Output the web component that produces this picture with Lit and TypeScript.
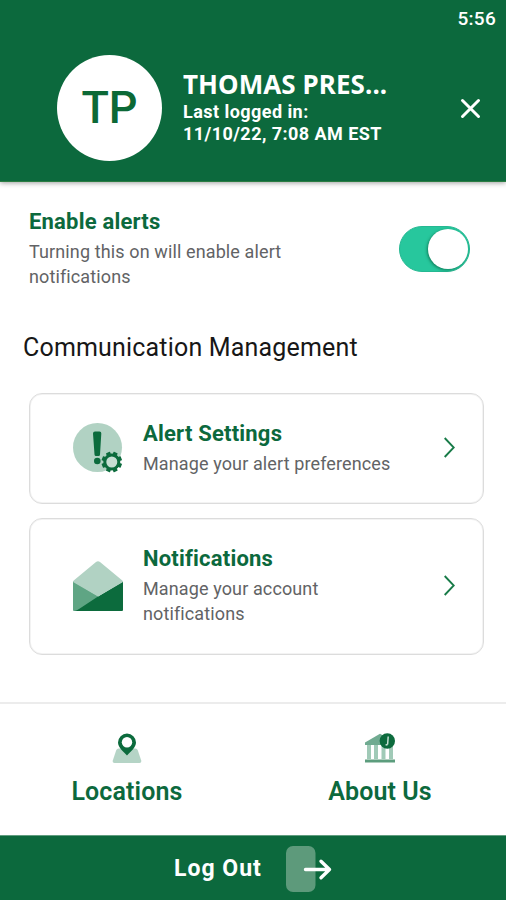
import { LitElement, html, css, svg } from "lit";
import { customElement } from "lit/decorators.js";

const gearTeeth = [0, 45, 90, 135, 180, 225, 270, 315];

const alertIcon = html`<svg width="50" height="50" viewBox="0 0 50 50">
  <circle cx="24.5" cy="24.5" r="24.5" fill="#b1d2c3" />
  <path d="M20 10.500Q20 8.500 22 8.500H26.500Q28.500 8.500 28.300 10.500L27 31.500Q27 33 25.500 33H23Q21.600 33 21.500 31.500Z" fill="#0c6b3d" />
  <circle cx="24.300" cy="38" r="3.300" fill="#0c6b3d" />
  <circle cx="38.800" cy="39" r="7" fill="#c6ded3" stroke="#0c6b3d" stroke-width="3" />
  ${gearTeeth.map((a) => svg`<rect x="36.600" y="28.700" width="4.400" height="3.500" rx=".5" fill="#0c6b3d" transform="rotate(${a + 22.5} 38.800 39)" />`)}
</svg>`;

const mailIcon = html`<svg width="50" height="52" viewBox="0 0 50 52">
  <path d="M0 21V50Q0 51 1 51H25V36Z" fill="#5fa584" />
  <path d="M50 21.500V50Q50 51 49 51H1.500Q4 50.500 6 49L25 36.500Z" fill="#0c6b3d" />
  <path d="M0 22Q0 21 1 20.200L23 2Q25 .7 27 2L49 20.200Q50 21 50 22L25 36.500Z" fill="#b1d2c3" />
</svg>`;

const pinIcon = html`<svg width="30" height="31" viewBox="0 0 30 31">
  <path d="M6.500 15.500H23.500Q25 15.500 25.700 17L29.200 27.600Q29.700 30 27.500 30H2.500Q.3 30 .8 27.600L4.300 17Q5 15.500 6.500 15.500Z" fill="#b5d4c6" />
  <path d="M15 22.500C11.500 18.500 6 14.500 6 9.500A9 9 0 0 1 24 9.500C24 14.500 18.500 18.500 15 22.500Z" fill="#0c6b3d" />
  <circle cx="15" cy="9.300" r="5.200" fill="#fff" />
</svg>`;

const bankIcon = html`<svg width="32" height="31" viewBox="0 0 32 31">
  <path d="M1 12V9.500L16 .8L22 4V12Z" fill="#70ab91" />
  <path d="M3 12H7V26H3ZM10 12H14V26H10ZM17.500 12H21.500V26H17.500ZM25 14H29V26H25Z" fill="#a0cab7" />
  <path d="M1 26.500H31V29.500H1Z" fill="#5c9d7d" />
  <circle cx="23.300" cy="8" r="7.700" fill="#0c6b3d" />
  <path d="M24.200 3.500L23.600 11.500M23.600 11.500L21.600 12" stroke="#c4ded1" stroke-width="1.500" fill="none" />
</svg>`;

const chevron = html`<svg class="chevron" width="12" height="21" viewBox="0 0 12 21">
  <path d="M1.700 1L10.800 10.500L1.700 20" fill="none" stroke="#187b48" stroke-width="1.900" />
</svg>`;

@customElement("app-root")
export class AppRoot extends LitElement {
  static styles = css`
    :host {
      display: flex;
      flex-direction: column;
      height: 900px;
      width: 506px;
      background: #fff;
      font-family: Roboto, sans-serif;
      overflow: hidden;
    }
    * { box-sizing: border-box; }
    svg { display: block; flex: none; }
    header {
      flex: none;
      height: 182px;
      background: #0c693d;
      border-bottom: 1px solid #2b7d43;
      box-shadow: 0 1px 5px rgba(0, 0, 0, 0.38);
      color: #fff;
    }
    .status {
      height: 37px;
      padding-right: 10px;
      text-align: right;
      font-size: 19px;
      font-weight: 500;
      line-height: 38px;
      letter-spacing: 0.3px;
    }
    .profile { display: flex; height: 142px; align-items: center; padding: 0 25.500px 0 57px; }
    .avatar {
      width: 105px;
      height: 106px;
      border-radius: 50%;
      background: #fff;
      color: #0c6936;
      font-size: 45px;
      font-weight: 500;
      line-height: 106px;
      text-align: center;
    }
    .who { margin-left: 21px; flex: 1; white-space: nowrap; padding-bottom: 2px; }
    .name { font: 700 26px/30px "Noto Sans", sans-serif; letter-spacing: 0.08px; padding-bottom: 2px; }
    .last { font-size: 18px; font-weight: 700; line-height: 22px; letter-spacing: 0.45px; }
    .enable { display: flex; align-items: center; height: 134px; padding: 0 36px 0 29px; }
    .copy { flex: 1; white-space: nowrap; padding-bottom: 5px; }
    .title { color: #0c693d; font-size: 22px; font-weight: 700; line-height: 34px; letter-spacing: 0.2px; }
    .text { color: #626365; font-size: 18px; line-height: 25px; letter-spacing: 0.12px; }
    .toggle {
      display: flex;
      justify-content: flex-end;
      align-items: center;
      width: 71px;
      height: 46px;
      border-radius: 23px;
      background: #27c79d;
      border: 1px solid #25b892;
      padding-right: 1px;
    }
    .knob { width: 40px; height: 40px; border-radius: 50%; background: #fff; box-shadow: -1px 1px 3px rgba(0, 80, 50, 0.6); }
    h2 {
      margin: 0;
      padding: 1px 0 0 23px;
      font-size: 25px;
      font-weight: 400;
      line-height: 61px;
      color: #171717;
      letter-spacing: 0.18px;
    }
    .cards { display: flex; flex-direction: column; gap: 14px; padding: 15px 22px 0 29px; }
    .card {
      display: flex;
      align-items: center;
      border: 1px solid #dcdcdc;
      box-shadow: inset 0 0 0 1px #f3f3f3;
      border-radius: 13px;
      padding: 0 28px 0 43px;
      height: 111px;
    }
    .card.tall { height: 137px; }
    .icon { width: 70px; padding-bottom: 1px; }
    .chevron { margin-bottom: 2px; }
    nav { flex: none; display: flex; margin-top: 47px; height: 133px; border-top: 2px solid #ececec; }
    .tab {
      flex: 1;
      display: flex;
      flex-direction: column;
      align-items: center;
      padding: 29px 0 0 1px;
      gap: 12px;
      color: #0c693d;
      font-size: 25px;
      font-weight: 600;
      line-height: 32px;
      letter-spacing: 0.12px;
    }
    footer {
      flex: 1;
      display: flex;
      align-items: center;
      gap: 24px;
      padding: 1px 0 0 174px;
      background: #0c693d;
      border-top: 1px solid #619d80;
      color: #fff;
      font-size: 23px;
      font-weight: 700;
      letter-spacing: 1px;
    }
  `;

  render() {
    return html`
      <header>
        <div class="status">5:56</div>
        <div class="profile">
          <div class="avatar">TP</div>
          <div class="who">
            <div class="name">THOMAS PRES...</div>
            <div class="last">Last logged in:<br />11/10/22, 7:08 AM EST</div>
          </div>
          <svg width="21" height="21" viewBox="0 0 21 21">
            <path d="M2.500 2.500L18.500 18.500M18.500 2.500L2.500 18.500" stroke="#fff" stroke-width="3" stroke-linecap="round" />
          </svg>
        </div>
      </header>
      <section class="enable">
        <div class="copy">
          <div class="title">Enable alerts</div>
          <div class="text">Turning this on will enable alert<br />notifications</div>
        </div>
        <div class="toggle"><div class="knob"></div></div>
      </section>
      <h2>Communication Management</h2>
      <section class="cards">
        <div class="card">
          <div class="icon">${alertIcon}</div>
          <div class="copy">
            <div class="title">Alert Settings</div>
            <div class="text">Manage your alert preferences</div>
          </div>
          ${chevron}
        </div>
        <div class="card tall">
          <div class="icon">${mailIcon}</div>
          <div class="copy">
            <div class="title">Notifications</div>
            <div class="text">Manage your account<br />notifications</div>
          </div>
          ${chevron}
        </div>
      </section>
      <nav>
        <div class="tab">${pinIcon}<span>Locations</span></div>
        <div class="tab">${bankIcon}<span>About Us</span></div>
      </nav>
      <footer>
        <span>Log Out</span>
        <svg width="47" height="46" viewBox="0 0 47 46">
          <rect x="0" y="0" width="29.500" height="46" rx="7" fill="#5d9a7b" />
          <path d="M19.500 23.500H43.500M35 15.300L43.500 23.500L35 31.700" fill="none" stroke="#fff" stroke-width="3.400" stroke-linecap="round" stroke-linejoin="round" />
        </svg>
      </footer>
    `;
  }
}
